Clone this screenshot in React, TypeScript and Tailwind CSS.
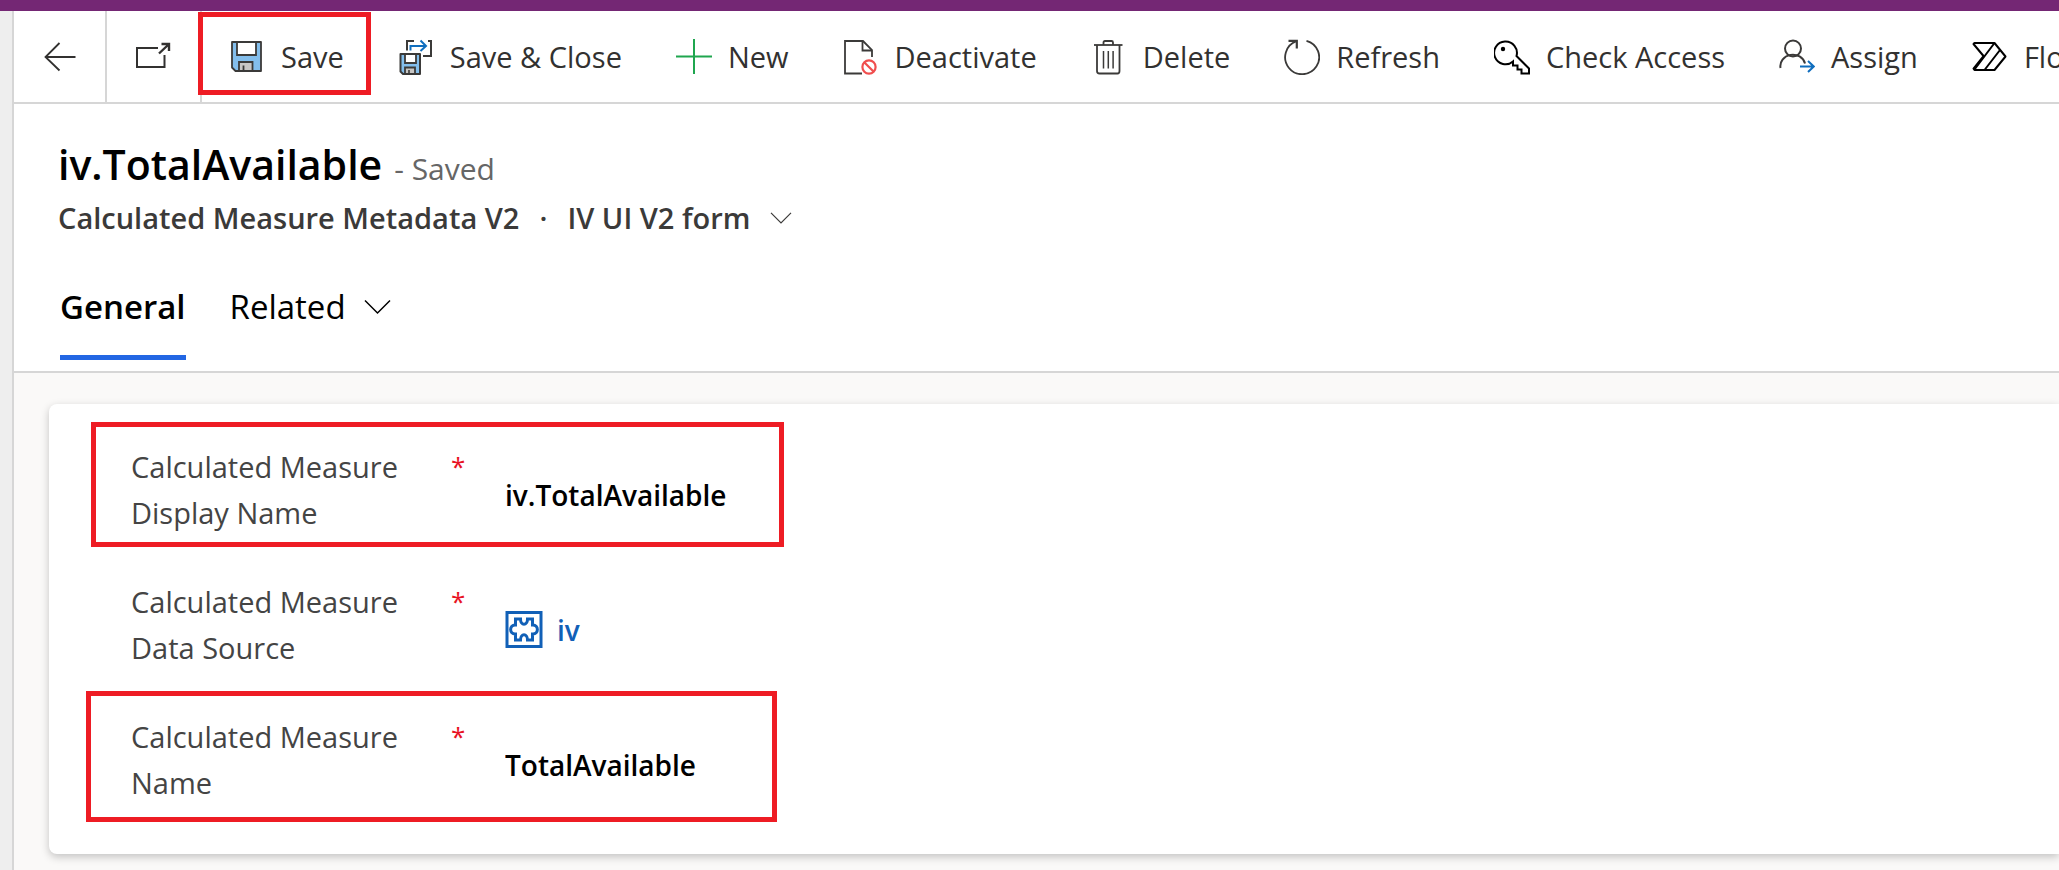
import type { ReactNode } from "react";

const INK = "#3b3a39";

function BackIcon() {
  return (
    <svg width="32" height="30" viewBox="0 0 32 30" fill="none" stroke="#323130" strokeWidth="1.8">
      <path d="M31.500 15H2M15.500 1L1.500 15L15.500 28.500" />
    </svg>
  );
}

function PopOutIcon() {
  return (
    <svg width="38" height="30" viewBox="0 0 38 30" fill="none" stroke="#323130" strokeWidth="2">
      <path d="M23 6H2V25H29.500V13" />
      <path d="M24 11.500L33 3M26.500 2H34V9" strokeWidth="2.400" />
    </svg>
  );
}

function SaveIcon() {
  return (
    <svg width="36" height="36" viewBox="0 0 36 36" fill="none" stroke={INK} strokeWidth="1.8">
      <path d="M3 3H32V32H6.500L3 28.500Z" fill="#83beec" strokeLinejoin="round" />
      <path d="M8 3H27V16H8Z" fill="#fff" />
      <path d="M10 32V23H23.500V32Z" fill="#c8c6c4" />
      <path d="M14.500 26.500V32" />
    </svg>
  );
}

function SaveCloseIcon() {
  return (
    <svg width="36" height="36" viewBox="0 0 36 36" fill="none" stroke={INK} strokeWidth="2">
      <path d="M16 2H9V11.500M30 2H33V17H25" />
      <path d="M12.500 11.500V7H27M22.500 1.500L28 7L22.500 12" stroke="#106ebe" />
      <path d="M2.500 15H22V35H5L2.500 32.500Z" fill="#83beec" strokeLinejoin="round" />
      <path d="M7 15H18V24H7Z" fill="#fff" strokeWidth="1.800" />
      <path d="M7 35V28.500H17V35Z" fill="#c8c6c4" strokeWidth="1.800" />
      <path d="M11 31V35" strokeWidth="1.600" />
    </svg>
  );
}

function PlusIcon() {
  return (
    <svg width="36" height="36" viewBox="0 0 36 36" fill="none" stroke="#1fa64f" strokeWidth="2">
      <path d="M18 0V35M0 17.500H36" />
    </svg>
  );
}

function DeactivateIcon() {
  return (
    <svg width="36" height="36" viewBox="0 0 36 36" fill="none" stroke={INK} strokeWidth="1.8">
      <path d="M19 34.500H2V2H20L29 11V18" />
      <path d="M19.500 2V11.500H29" />
      <g stroke="#f04e4e" strokeWidth="2.200">
        <circle cx="26" cy="28" r="6.600" />
        <path d="M21.500 23.500L30.500 32.500" />
      </g>
    </svg>
  );
}

function DeleteIcon() {
  return (
    <svg width="36" height="36" viewBox="0 0 36 36" fill="none" stroke={INK} strokeWidth="1.8">
      <path d="M3 6H31.500" />
      <path d="M12.500 6V3.500Q12.500 2 14 2H20.500Q22 2 22 3.500V6" />
      <path d="M6 6V32Q6 34.500 8.500 34.500H26.500Q28.500 34.500 28.500 32V6" />
      <path d="M12.500 12V29.500M17.300 12V29.500M22.100 12V29.500" strokeWidth="1.500" />
    </svg>
  );
}

function RefreshIcon() {
  return (
    <svg width="36" height="36" viewBox="0 0 36 36" fill="none" stroke={INK} strokeWidth="1.8">
      <path d="M22.500 1.800A17 17 0 1 1 12.500 2.200" />
      <path d="M4.500 1.800H12.800V9.500" strokeWidth="2.200" />
    </svg>
  );
}

function KeyIcon() {
  return (
    <svg width="36" height="36" viewBox="0 0 36 36" fill="none" stroke="#000" strokeWidth="2">
      <path d="M22.500 17L35 29.500V34.500H27.500V30.500H23.500V26.500H19V22.500A11.400 11.400 0 1 1 22.500 17Z" />
      <circle cx="9" cy="10" r="2.200" fill="#000" stroke="none" />
    </svg>
  );
}

function AssignIcon() {
  return (
    <svg width="36" height="36" viewBox="0 0 36 36" fill="none" stroke={INK} strokeWidth="2">
      <circle cx="14" cy="9.500" r="8" />
      <path d="M1.500 29A12.500 11.500 0 0 1 26 24.500" />
      <path d="M21 27.500H35M29 22L34.800 27.500L29 33" stroke="#106ebe" />
    </svg>
  );
}

function FlowIcon() {
  return (
    <svg width="36" height="36" viewBox="0 0 36 36" fill="none" stroke="#000" strokeWidth="2" strokeLinejoin="round">
      <path d="M2.500 4H22.500L33.500 17.500L22.500 31H2.500L1.500 29.500L11.500 17L1.500 5Z" />
      <path d="M22.500 4L2.500 30.500M28 11L12.500 31" />
    </svg>
  );
}

function Chevron({ small = false }: { small?: boolean }) {
  return (
    <svg
      className={small ? "h-3 w-[22px]" : "h-4 w-[27px]"}
      viewBox="0 0 27 15"
      fill="none"
      stroke="currentColor"
      strokeWidth="1.5"
    >
      <path d="M1 1L13.500 13.500L26 1" />
    </svg>
  );
}

function PuzzleIcon() {
  return (
    <svg width="38" height="38" viewBox="0 0 38 38" fill="none" stroke="#1160b7" strokeWidth="3">
      <path d="M2 1.500H36V35.500H2Z" />
      <path d="M10.500 8H15.500C15.500 15 22.500 15 22.500 8H27.500V14C34 13.500 34 23.500 27.500 23V29H22.500C22.500 22 15.500 22 15.500 29H10.500V23C4 23.500 4 13.500 10.500 14Z" />
    </svg>
  );
}

const commands: { label: string; icon: ReactNode; marked?: boolean }[] = [
  { label: "Save", icon: <SaveIcon />, marked: true },
  { label: "Save & Close", icon: <SaveCloseIcon /> },
  { label: "New", icon: <PlusIcon /> },
  { label: "Deactivate", icon: <DeactivateIcon /> },
  { label: "Delete", icon: <DeleteIcon /> },
  { label: "Refresh", icon: <RefreshIcon /> },
  { label: "Check Access", icon: <KeyIcon /> },
  { label: "Assign", icon: <AssignIcon /> },
  { label: "Flow", icon: <FlowIcon /> },
];

function CommandBar() {
  return (
    <div role="toolbar" aria-label="Commands" className="flex h-[93px] shrink-0 overflow-hidden border-b-2 border-[#d6d6d6]">
      <button aria-label="Back" className="flex w-[93px] shrink-0 items-center justify-center border-r-2 border-[#d6d6d6]">
        <BackIcon />
      </button>
      <button aria-label="Open in new window" className="flex w-[95px] shrink-0 items-center justify-center border-r-2 border-[#d6d6d6]">
        <PopOutIcon />
      </button>
      <div className="flex">
        {commands.map((c) => (
          <button key={c.label} className="relative flex shrink-0 items-center gap-4 px-[27px] whitespace-nowrap">
            {c.icon}
            <span className="text-[29px]">{c.label}</span>
            {c.marked && <span className="absolute top-px -left-1 h-[83px] w-[173px] border-5 border-[#ee1c24]" />}
          </button>
        ))}
      </div>
    </div>
  );
}

function RecordHeader() {
  return (
    <header className="border-b-2 border-[#d6d6d6] px-11">
      <div className="flex items-baseline gap-3 pt-[30px]">
        <h1 className="text-[41px] leading-[60px] font-semibold text-black">iv.TotalAvailable</h1>
        <span className="text-[30px] text-[#666]">- Saved</span>
      </div>
      <div className="flex items-center text-[29px] leading-[48px] font-semibold text-[#3b3a39]">
        <span>Calculated Measure Metadata V2</span>
        <span className="w-12 text-center">·</span>
        <button className="flex items-center gap-5">
          IV UI V2 form
          <Chevron small />
        </button>
      </div>
      <div role="tablist" className="mt-[35px] flex h-[94px] gap-11 px-0.5 text-[33px] leading-[60px] text-black">
        <button role="tab" aria-selected="true" className="h-[83px] border-b-5 border-[#2266e3] pb-[18px] font-semibold">
          General
        </button>
        <button role="tab" aria-selected="false" className="flex h-[60px] items-center gap-[18px]">
          Related
          <Chevron />
        </button>
      </div>
    </header>
  );
}

function Field({ id, label, children, mark }: { id: string; label: string; children: ReactNode; mark?: ReactNode }) {
  return (
    <div className="relative flex h-[135px]">
      <label htmlFor={id} className="w-[320px] pr-10 text-[29px] leading-[46px] text-[#444]">
        {label}
      </label>
      <span className="w-[54px] text-[26px] leading-[44px] text-[#e81123]">*</span>
      <div className="flex h-[102px] items-center">{children}</div>
      {mark}
    </div>
  );
}

export default function App() {
  return (
    <div className="min-h-screen overflow-hidden bg-[#eeeeee] font-['Open_Sans','Noto_Sans',sans-serif] text-[#323130]">
      <div className="h-[11px] bg-[#742774]" />
      <main className="ml-3 flex min-h-[calc(100vh-11px)] flex-col border-l-2 border-[#d6d6d6] bg-white">
        <CommandBar />
        <RecordHeader />
        <section className="flex-1 bg-[#faf9f8] pt-[31px] pl-[35px]">
          <form className="rounded-l-lg bg-white pt-10 pb-[5px] pl-[82px] shadow-[0_3px_8px_rgba(0,0,0,0.22)]">
            <Field
              id="display-name"
              label="Calculated Measure Display Name"
              mark={<span className="absolute -top-[22px] -left-10 h-[125px] w-[693px] border-5 border-[#ee1c24]" />}
            >
              <input id="display-name" defaultValue="iv.TotalAvailable" className="w-[260px] text-[28px] font-semibold text-black outline-none" />
            </Field>
            <Field id="data-source" label="Calculated Measure Data Source">
              <a id="data-source" href="#iv" className="flex items-center gap-3.5 text-[28px] font-semibold text-[#1160b7]">
                <PuzzleIcon />
                iv
              </a>
            </Field>
            <Field
              id="measure-name"
              label="Calculated Measure Name"
              mark={<span className="absolute -top-[23px] -left-[45px] h-[131px] w-[691px] border-5 border-[#ee1c24]" />}
            >
              <input id="measure-name" defaultValue="TotalAvailable" className="w-[260px] text-[28px] font-semibold text-black outline-none" />
            </Field>
          </form>
        </section>
      </main>
    </div>
  );
}
